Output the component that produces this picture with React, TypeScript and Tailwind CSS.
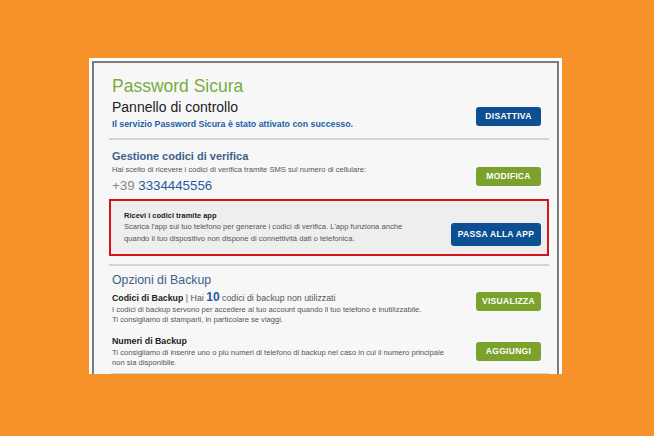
const font = { fontFamily: '"Liberation Sans", Arial, sans-serif' };

function Btn({ label, color, w = "w-[65px]", h = "h-[19px]" }: { label: string; color: "blue" | "green"; w?: string; h?: string }) {
  return (
    <div
      className={`${w} ${h} flex items-center justify-center rounded-[3px] text-[8.5px] font-bold tracking-[0.3px] text-white ${
        color === "blue" ? "bg-[#0d4f93]" : "bg-[#7aa22c]"
      }`}
    >
      {label}
    </div>
  );
}

export default function App() {
  return (
    <div className="w-[654px] h-[436px] overflow-hidden bg-[#f7922b] pt-[58px] pl-[89px]" style={font}>
      <div className="w-[473px] h-[316px] overflow-hidden bg-white pt-[3px] px-[3px]">
        <div className="h-full border-x-2 border-t-2 border-[#7c7c7c] bg-[#f7f7f7] pl-[15px] pr-[8px]">
          {/* header */}
          <div className="flex items-end justify-between pt-[12px] pb-[7px] pl-[3px] pr-[8px] border-b-2 border-[#d4d4d4]">
            <div>
              <div className="text-[17.5px] leading-[22px] text-[#7aab3c]">Password Sicura</div>
              <div className="text-[14px] leading-[20px] text-[#222]">Pannello di controllo</div>
              <div className="text-[8.8px] leading-[14px] font-bold text-[#1b5fa8]">
                Il servizio Password Sicura è stato attivato con successo.
              </div>
            </div>
            <div className="mb-[5px]">
              <Btn label="DISATTIVA" color="blue" />
            </div>
          </div>

          {/* verifica */}
          <div className="pt-[9px] pb-[8px] border-b-2 border-[#d4d4d4]">
            <div className="flex items-end justify-between pl-[3px] pr-[8px]">
              <div>
                <div className="text-[11px] leading-[15px] font-bold text-[#40608a]">Gestione codici di verifica</div>
                <div className="text-[7.6px] leading-[11px] text-[#555]">
                  Hai scelto di ricevere i codici di verifica tramite SMS sul numero di cellulare:
                </div>
                <div className="text-[13.3px] leading-[18px] mt-[2px]">
                  <span className="text-[#888]">+39 </span>
                  <span className="text-[#1f5d9e]">3334445556</span>
                </div>
              </div>
              <div className="mb-[9px]">
                <Btn label="MODIFICA" color="green" />
              </div>
            </div>
            <div className="mt-[4px] border-2 border-[#d8121b] bg-[#eeeeee] flex items-center justify-between pl-[13px] pr-[6px] h-[57px]">
              <div>
                <div className="text-[7.5px] leading-[11px] font-bold text-[#222]">Ricevi i codici tramite app</div>
                <div className="text-[7.6px] leading-[12px] text-[#555]">
                  Scarica l'app sul tuo telefono per generare i codici di verifica. L'app funziona anche
                  <br />
                  quando il tuo dispositivo non dispone di connettività dati o telefonica.
                </div>
              </div>
              <div className="mt-[14px]">
                <Btn label="PASSA ALLA APP" color="blue" w="w-[90px]" h="h-[23px]" />
              </div>
            </div>
          </div>

          {/* backup */}
          <div className="pt-[5px] pl-[3px] pr-[8px]">
            <div className="text-[12.3px] leading-[18px] font-medium text-[#40608a]">Opzioni di Backup</div>
            <div className="flex items-start justify-between mt-[2px]">
              <div>
                <div className="text-[8.8px] leading-[13px] text-[#333]">
                  <span className="font-bold text-[#222]">Codici di Backup</span>
                  <span className="text-[#666]"> | </span>
                  <span className="text-[#555]">Hai </span>
                  <span className="text-[12px] font-bold text-[#1f5d9e]">10</span>
                  <span className="text-[#555]"> codici di backup non utilizzati</span>
                </div>
                <div className="text-[7.6px] leading-[10px] text-[#555]">
                  I codici di backup servono per accedere al tuo account quando il tuo telefono è inutilizzabile.
                  <br />
                  Ti consigliamo di stamparli, in particolare se viaggi.
                </div>
              </div>
              <div className="mt-[1px]">
                <Btn label="VISUALIZZA" color="green" />
              </div>
            </div>
            <div className="flex items-start justify-between mt-[10px]">
              <div>
                <div className="text-[8.8px] leading-[13px] font-bold text-[#222]">Numeri di Backup</div>
                <div className="text-[7.6px] leading-[10px] text-[#555]">
                  Ti consigliamo di inserire uno o più numeri di telefono di backup nel caso in cui il numero principale
                  <br />
                  non sia disponibile.
                </div>
              </div>
              <div className="mt-[7px]">
                <Btn label="AGGIUNGI" color="green" />
              </div>
            </div>
            <div className="mt-[5px] -mr-[8px] -ml-[1px] border-b-2 border-[#d4d4d4]" />
          </div>
        </div>
      </div>
    </div>
  );
}
